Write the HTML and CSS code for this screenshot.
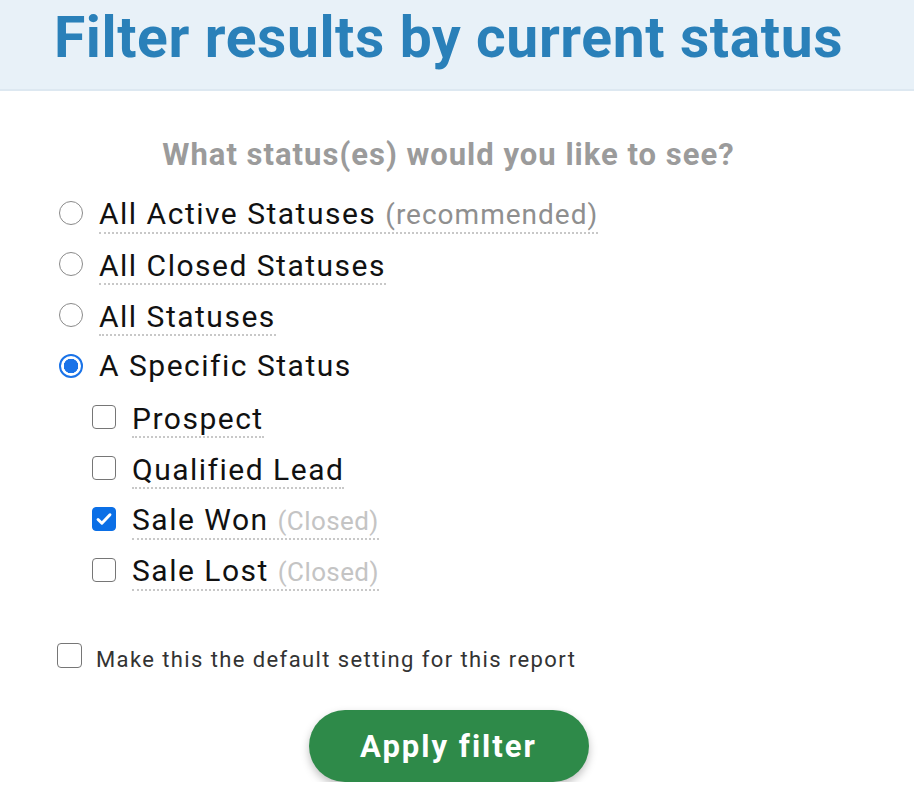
FILE: index.html
```html
<!DOCTYPE html>
<html>
<head>
<meta charset="utf-8">
<link rel="stylesheet" href="styles.css">
</head>
<body>
<header class="head">
  <h1 class="title">Filter results by current status</h1>
</header>
<main class="body">
  <h2 class="question">What status(es) would you like to see?</h2>
  <div class="options">
    <label class="row"><span class="radio"></span><span class="lbl">All Active Statuses <span class="hint">(recommended)</span></span></label>
    <label class="row"><span class="radio"></span><span class="lbl">All Closed Statuses</span></label>
    <label class="row"><span class="radio"></span><span class="lbl">All Statuses</span></label>
    <label class="row"><span class="radio on"></span><span class="plain">A Specific Status</span></label>
    <div class="sub">
      <label class="row"><span class="box"></span><span class="lbl">Prospect</span></label>
      <label class="row"><span class="box"></span><span class="lbl">Qualified Lead</span></label>
      <label class="row"><span class="box on"><svg viewBox="0 0 24 24" width="24" height="24"><path d="M5.5 12.5l4.2 4.2 8.8-9.4" fill="none" stroke="#fff" stroke-width="3.2" stroke-linecap="round" stroke-linejoin="round"/></svg></span><span class="lbl">Sale Won <span class="hint light">(Closed)</span></span></label>
      <label class="row"><span class="box"></span><span class="lbl">Sale Lost <span class="hint light">(Closed)</span></span></label>
    </div>
  </div>
  <label class="default"><span class="box"></span><span>Make this the default setting for this report</span></label>
  <div class="actions"><button class="apply">Apply filter</button></div>
</main>
</body>
</html>
```
FILE: styles.css
```css
html, body { margin: 0; padding: 0; background: #fff; }
body { font-family: Roboto, "Noto Sans", sans-serif; color: #111; }
.head {
  background: #e8f1f8;
  border-bottom: 2px solid #dde8f1;
  height: 89px;
  display: flex;
  align-items: center;
  justify-content: center;
  padding-right: 17px;
}
.title {
  margin: 0;
  font-size: 57px;
  font-weight: 700;
  color: #2a80b9;
  letter-spacing: 0.6px;
  position: relative;
  top: -7px;
}
.body { padding-right: 17px; }
.question {
  margin: 44px 0 0 0;
  text-align: center;
  font-size: 31px;
  font-weight: 700;
  color: #9b9b9b;
  line-height: 40px;
  letter-spacing: 1px;
}
.options { padding-left: 59px; margin-top: 12px; }
.row {
  display: flex;
  align-items: center;
  height: 51px;
  font-size: 30px;
  letter-spacing: 1.5px;
}
.sub { padding-left: 33px; }
.radio {
  width: 24px; height: 24px;
  border: 1px solid #8a8a8a;
  border-radius: 50%;
  box-sizing: border-box;
  margin-right: 16px;
  flex: none;
}
.radio.on {
  border: 2px solid #1a73e8;
  background: radial-gradient(circle, #1a73e8 0 7px, #fff 7.5px);
}
.box {
  width: 24px; height: 24px;
  border: 1px solid #767676;
  border-radius: 4px;
  box-sizing: border-box;
  margin-right: 16px;
  flex: none;
  display: flex; align-items: center; justify-content: center;
}
.box.on { background: #0b6fe6; border-color: #0b6fe6; }
.lbl {
  border-bottom: 2px dotted #c8c8c8;
  line-height: 34px;
  position: relative;
  top: 3px;
}
.plain { line-height: 34px; }
.hint { color: #8f8f8f; font-size: 28px; letter-spacing: 1px; }
.hint.light { color: #c4c4c4; font-size: 26px; letter-spacing: 0.4px; }
.default {
  display: flex;
  align-items: center;
  margin: 52px 0 0 57px;
  font-size: 22px;
  color: #333;
  letter-spacing: 1.4px;
}
.default .box { width: 25px; height: 25px; margin-right: 14px; position: relative; top: -4px; }
.actions { display: flex; justify-content: center; margin-top: 38px; }
.apply {
  font-family: Roboto, sans-serif;
  width: 280px; height: 72px;
  border: none;
  border-radius: 36px;
  background: #2e8a49;
  color: #fff;
  font-size: 31px;
  font-weight: 700;
  letter-spacing: 2px;
  box-shadow: 0 4px 8px rgba(0,0,0,0.25);
}
```
